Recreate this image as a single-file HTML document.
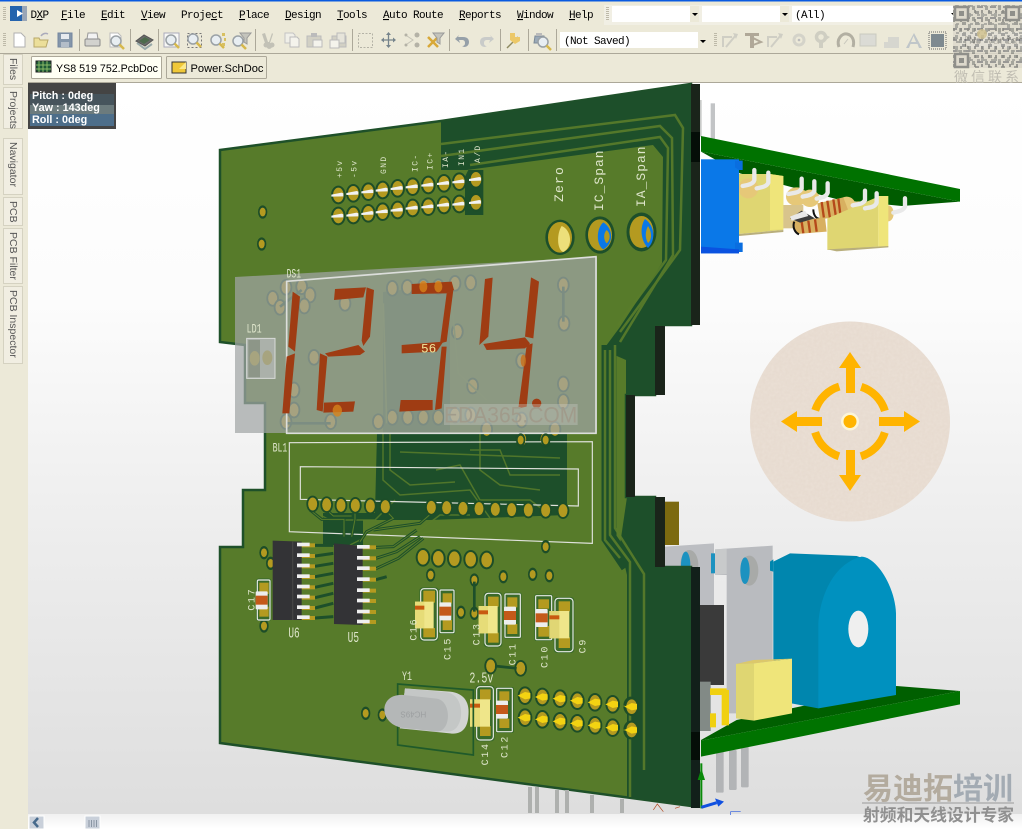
<!DOCTYPE html>
<html><head><meta charset="utf-8"><title>PCB 3D</title>
<style>
html,body{margin:0;padding:0;background:#fff;width:1022px;height:829px;overflow:hidden}
svg{display:block}
.m{font:11px "Liberation Mono",monospace;letter-spacing:-.6px;fill:#000}
.tab{font:10.5px "Liberation Sans",sans-serif;fill:#555}
.i{font:bold 10.8px "Liberation Sans",sans-serif;fill:#fff}
.s{font-family:"Liberation Mono",monospace;fill:#dfe6cc}
</style></head><body>
<svg width="1022" height="829" viewBox="0 0 1022 829" xmlns="http://www.w3.org/2000/svg">
<defs>
<linearGradient id="bg" x1="0" y1="83" x2="0" y2="814" gradientUnits="userSpaceOnUse"><stop offset="0" stop-color="#fff"/><stop offset=".3" stop-color="#fcfcfc"/><stop offset=".57" stop-color="#efefef"/><stop offset="1" stop-color="#dedede"/></linearGradient>
<linearGradient id="bt" x1="0" y1="0" x2="0" y2="1"><stop offset="0" stop-color="#f0f0f0"/><stop offset="1" stop-color="#fff"/></linearGradient>
<pattern id="q1" width="13" height="11" patternUnits="userSpaceOnUse"><rect width="13" height="11" fill="#ddd9cc"/><rect x="0" y="0" width="4" height="3" fill="#8f8f8a"/><rect x="6" y="2" width="3" height="4" fill="#9c9c96"/><rect x="2" y="6" width="6" height="2" fill="#888"/><rect x="10" y="6" width="3" height="4" fill="#96968f"/></pattern>
<pattern id="q2" width="7" height="9" patternUnits="userSpaceOnUse"><rect x="1" y="1" width="2" height="3" fill="#8a8a85" opacity=".8"/><rect x="4" y="5" width="3" height="2" fill="#a0a09a" opacity=".8"/></pattern>
<filter id="tx" x="0" y="0" width="1" height="1"><feTurbulence type="fractalNoise" baseFrequency=".35" numOctaves="2" seed="4"/><feColorMatrix values="0 0 0 0 1  0 0 0 0 .96  0 0 0 0 .9  0 0 0 .7 -.2"/><feComposite in2="SourceAlpha" operator="in"/></filter>
<g id="p"><ellipse rx="22" ry="28" fill="#1d4d28"/><ellipse rx="16" ry="22" fill="#b49a20"/></g>
<g id="d"><ellipse rx="19" ry="25" fill="#1d4d28"/><ellipse rx="13.500" ry="19.500" fill="#b49a20"/></g>
<g id="sm"><ellipse rx="14" ry="20" fill="#1d4d28"/><ellipse rx="9" ry="13" fill="#b49a20"/></g>
<g id="hp"><use href="#p"/><path d="M-21-1 10-7 15-5 15 4 -21 5Z" fill="#f2f2f2"/></g>
<g id="yp"><use href="#p"/><path d="M-22 0 0-11 16-8 16 8 0 11Z" fill="#f3d312"/></g>
<g id="mg"><circle r="5" fill="#e8eef2" stroke="#9aa1a6" stroke-width="1.500"/><path d="M3.500 3.500 8 8" stroke="#d6b84c" stroke-width="2.500"/></g>
<g id="res"><rect x="0" y="0" width="36" height="54" rx="3" fill="#ededed"/><rect x="0" y="13" width="36" height="27" fill="#c4591a"/></g>
</defs>

<!-- chrome -->
<rect width="1022" height="829" fill="#ece9d8"/>
<rect width="1022" height="1.500" fill="#0a5ae0"/>
<rect x="604" y="5" width="350" height="20" fill="#f1efe4"/>
<g fill="#bdb9a8"><rect x="3" y="7" width="3" height="1"/><rect x="3" y="9" width="3" height="1"/><rect x="3" y="11" width="3" height="1"/><rect x="3" y="13" width="3" height="1"/><rect x="3" y="15" width="3" height="1"/><rect x="3" y="17" width="3" height="1"/><rect x="3" y="19" width="3" height="1"/>
<rect x="3" y="33" width="3" height="1"/><rect x="3" y="35" width="3" height="1"/><rect x="3" y="37" width="3" height="1"/><rect x="3" y="39" width="3" height="1"/><rect x="3" y="41" width="3" height="1"/><rect x="3" y="43" width="3" height="1"/><rect x="3" y="45" width="3" height="1"/>
<rect x="606" y="7" width="3" height="1"/><rect x="606" y="9" width="3" height="1"/><rect x="606" y="11" width="3" height="1"/><rect x="606" y="13" width="3" height="1"/><rect x="606" y="15" width="3" height="1"/><rect x="606" y="17" width="3" height="1"/><rect x="606" y="19" width="3" height="1"/>
<rect x="714" y="33" width="3" height="1"/><rect x="714" y="35" width="3" height="1"/><rect x="714" y="37" width="3" height="1"/><rect x="714" y="39" width="3" height="1"/><rect x="714" y="41" width="3" height="1"/><rect x="714" y="43" width="3" height="1"/><rect x="714" y="45" width="3" height="1"/></g>
<rect x="10" y="6" width="12" height="15" fill="#2463ad"/><rect x="22" y="6" width="5" height="15" fill="#9aa6b6"/><path d="M17 10 23 13.500 17 17Z" fill="#fff"/>
<text class="m" x="30.500" y="18">D<tspan text-decoration="underline">X</tspan>P</text>
<text class="m" x="61" y="18"><tspan text-decoration="underline">F</tspan>ile</text>
<text class="m" x="101" y="18"><tspan text-decoration="underline">E</tspan>dit</text>
<text class="m" x="141" y="18"><tspan text-decoration="underline">V</tspan>iew</text>
<text class="m" x="181" y="18">Proje<tspan text-decoration="underline">c</tspan>t</text>
<text class="m" x="239" y="18"><tspan text-decoration="underline">P</tspan>lace</text>
<text class="m" x="285" y="18"><tspan text-decoration="underline">D</tspan>esign</text>
<text class="m" x="337" y="18"><tspan text-decoration="underline">T</tspan>ools</text>
<text class="m" x="383" y="18"><tspan text-decoration="underline">A</tspan>uto Route</text>
<text class="m" x="459" y="18"><tspan text-decoration="underline">R</tspan>eports</text>
<text class="m" x="517" y="18"><tspan text-decoration="underline">W</tspan>indow</text>
<text class="m" x="569" y="18"><tspan text-decoration="underline">H</tspan>elp</text>
<!-- combos -->
<rect x="612" y="6" width="87" height="16" fill="#fff"/><rect x="690" y="6" width="9" height="16" fill="#ece9d8"/><path d="M692 13h6l-3 3z"/>
<rect x="702" y="6" width="87" height="16" fill="#fff"/><rect x="780" y="6" width="9" height="16" fill="#ece9d8"/><path d="M782 13h6l-3 3z"/>
<rect x="792" y="6" width="162" height="16" fill="#fff"/><text class="m" x="795" y="18">(All)</text><path d="M951 13h6l-3 3z"/>
<rect x="560" y="32" width="148" height="16" fill="#fff"/><rect x="698" y="32" width="10" height="16" fill="#ece9d8"/><path d="M700 40h6l-3 3z"/><text class="m" x="564" y="44">(Not Saved)</text>
<rect x="0" y="53" width="1022" height="1" fill="#aca899"/><rect x="28" y="82" width="994" height="1" fill="#aca899"/>
<!-- toolbar separators -->
<g fill="#aca899"><rect x="79" y="29" width="1" height="22"/><rect x="130" y="29" width="1" height="22"/><rect x="158" y="29" width="1" height="22"/><rect x="255" y="29" width="1" height="22"/><rect x="352" y="29" width="1" height="22"/><rect x="449" y="29" width="1" height="22"/><rect x="500" y="29" width="1" height="22"/><rect x="528" y="29" width="1" height="22"/><rect x="556" y="29" width="1" height="22"/></g>
<!-- toolbar icons -->
<path d="M14 33h7l4 4v10H14z" fill="#fff" stroke="#b0b0b0"/>
<path d="M34 47V38h5l1 2h8l-2 7z" fill="#ecdf9a" stroke="#b8a868"/><path d="M41 36c2-3 5-3 7-2" stroke="#aab" fill="none" stroke-width="1.500"/>
<rect x="58" y="33" width="14" height="14" fill="#8496aa" stroke="#7587a0"/><rect x="61" y="34" width="8" height="5" fill="#e6eaef"/><rect x="61" y="42" width="8" height="5" fill="#b3bdc8"/>
<path d="M88 33h9l1 6H87z" fill="#f3f3f3" stroke="#999"/><rect x="85" y="39" width="15" height="7" rx="1" fill="#d2d2ce" stroke="#8a8a8a"/>
<path d="M110 33h8l3 3v11h-11z" fill="#fff" stroke="#bbb"/><use href="#mg" x="116" y="41"/>
<path d="M136 41 144 35 153 40 145 46Z" fill="#6a6a6a" stroke="#555"/><path d="M137 43 145 49 152 44" fill="none" stroke="#9aa" stroke-width="2"/><path d="M139 41 145 37 150 40 144 44Z" fill="#4c6a4c"/>
<path d="M164 33h15v14h-15z" fill="#f8f8f6" stroke="#aab"/><use href="#mg" x="171" y="40"/>
<rect x="187.500" y="33.500" width="14" height="14" fill="none" stroke="#777" stroke-dasharray="2 2"/><use href="#mg" x="193" y="39"/>
<use href="#mg" x="216" y="40"/><g fill="#d8c060"><rect x="222" y="33" width="3" height="3"/><rect x="224" y="38" width="2" height="3"/><rect x="222" y="43" width="3" height="3"/></g>
<use href="#mg" x="238" y="41"/><path d="M240 33h11l-4 5v6l-3-2v-4z" fill="#c4c4bc" stroke="#999"/>
<g fill="#c2c1b6"><path d="M265 33l3 9h1l3-9 1 1-3 9a3 3 0 1 1-3 1l-2-1-3-9z"/><circle cx="266" cy="45" r="2.500"/><circle cx="272" cy="45" r="2.500"/></g>
<path d="M285 33h8l2 2v8h-10z" fill="#f0efe8" stroke="#c4c4c4"/><path d="M290 37h7l2 2v8h-9z" fill="#f4f3ec" stroke="#bbb"/>
<path d="M307 36h14v11h-14z" fill="#d2d0c4" stroke="#bbb"/><rect x="311" y="33" width="6" height="4" fill="#bbb"/><path d="M313 40h9v7h-9z" fill="#f4f3ec" stroke="#bbb"/>
<path d="M332 36h14v11h-14z" fill="#d2d0c4" stroke="#bbb"/><path d="M337 33h8v10h-8z" fill="#e6e4da" stroke="#bbb"/><path d="M330 40h9v8h-9z" fill="#f4f3ec" stroke="#bbb"/>
<rect x="358.500" y="33.500" width="14" height="14" fill="none" stroke="#b4b2a6" stroke-dasharray="2 1.500"/>
<path d="M388.500 33v14M382 40h13" stroke="#76848c" stroke-width="1.300"/><path d="M386 35l2.500-3 2.500 3zM386 45l2.500 3 2.500-3zM384 37.500l-3 2.500 3 2.500zM393 37.500l3 2.500-3 2.500z" fill="#76848c"/>
<g fill="#b4b2a6"><circle cx="406" cy="35" r="1.500"/><circle cx="406" cy="45" r="1.500"/><circle cx="417" cy="35" r="2.500"/><circle cx="417" cy="45" r="2.500"/></g><path d="M407 36l6 4-6 4" fill="none" stroke="#c4c2b6"/>
<path d="M428 37l10 10M438 37l-10 10" stroke="#d8a838" stroke-width="2.500"/><path d="M433 33h11l-4 5v6l-3-2v-4z" fill="#c4c4bc" stroke="#999"/>
<path d="M458 37h5c5 0 6 3 6 5 0 3-2 5-5 5l-2-1c2 0 3-1 3-3s-1-3-3-3h-3l1 3-5-4 4-4z" fill="#96a0a8"/>
<path d="M491 37h-5c-5 0-6 3-6 5 0 3 2 5 5 5l2-1c-2 0-3-1-3-3s1-3 3-3h3l-1 3 5-4-4-4z" fill="#c9cbc9"/>
<path d="M507 48 518 37" stroke="#8d8a60" stroke-width="1.500"/><path d="M510 33h5v4h5v4l-5 3-5-4z" fill="#ecc868"/>
<path d="M535 36h9l1 7h-11z" fill="#9baab8" stroke="#7c8a98"/><use href="#mg" x="543" y="42"/><rect x="536" y="33" width="6" height="3" fill="#bbb"/>
<g stroke="#cfcec4" fill="none" stroke-width="2"><path d="M723 47V37h9"/><path d="M726 47l10-12"/></g><path d="M733 33l5 1-2 5z" fill="#cfcec4"/>
<path d="M745 33h14v3h-5v12h-4V36h-5z" fill="#b0a898"/><path d="M753 38l8 4-8 3" fill="none" stroke="#b0a898" stroke-width="2"/>
<g stroke="#cfcec4" fill="none" stroke-width="2"><path d="M768 47V37h9"/><path d="M771 47l10-12"/></g><path d="M778 33l5 1-2 5z" fill="#cfcec4"/>
<circle cx="799" cy="40" r="5" fill="none" stroke="#d4d3c9" stroke-width="3"/><circle cx="799" cy="40" r="1.300" fill="#bbb"/>
<circle cx="821" cy="37" r="4.500" fill="none" stroke="#cfcec2" stroke-width="3.500"/><rect x="819" y="41" width="4" height="7" fill="#cfcec2"/><path d="M826 35l4 2-4 3z" fill="#cfcec2"/>
<path d="M839 47c-3-8 3-14 8-13s8 6 6 13" fill="none" stroke="#b2afa2" stroke-width="3"/><path d="M844 44l4-5" stroke="#c7c6bc"/>
<rect x="860" y="34" width="16" height="12" fill="#dbdbd5" stroke="#cacac0"/>
<path d="M884 42h15v6h-15zM888 37h11v5h-11z" fill="#d6d6cf"/>
<path d="M906 48 914 33 922 48h-3l-1.500-4h-7l-1.500 4zM911 42h5l-2.500-6z" fill="#c0c6c9"/>
<rect x="931" y="34" width="13" height="13" fill="#7e8a90"/><rect x="929" y="32" width="17" height="17" fill="none" stroke="#666" stroke-dasharray="1 1"/>
<!-- variations + QR overlay -->
<rect x="960" y="32" width="62" height="16" fill="#fff"/>
<text class="m" x="963" y="44">[No Variat</text>
<rect x="953" y="5" width="69" height="63" fill="url(#q1)" opacity=".82"/><rect x="953" y="5" width="69" height="63" fill="url(#q2)"/>
<g fill="#ddd9cc" stroke="#8f8f8a" stroke-width="2.500"><rect x="955" y="7" width="13" height="13"/><rect x="1006" y="7" width="13" height="13"/><rect x="955" y="54" width="13" height="13"/></g>
<g fill="#8f8f8a"><rect x="959" y="11" width="5" height="5"/><rect x="1010" y="11" width="5" height="5"/><rect x="959" y="58" width="5" height="5"/></g>
<circle cx="982" cy="34" r="5" fill="#cfc08c" opacity=".8"/>
<text x="954" y="82" font-family="'Liberation Sans','Noto Sans CJK SC',sans-serif" font-size="14" fill="#c0bdb2" letter-spacing="3">微信联系</text>
<!-- doc tabs -->
<rect x="31.500" y="56.500" width="130" height="22" rx="1" fill="#fffff4" stroke="#aca899"/>
<rect x="36" y="61" width="15" height="11" fill="#1e5a36" stroke="#222"/><path d="M39 61v11M43 61v11M47 61v11M36 65h15M36 69h15" stroke="#8bbb66"/>
<text x="56" y="72" font-family="'Liberation Sans',sans-serif" font-size="11" fill="#000" textLength="102" lengthAdjust="spacingAndGlyphs">YS8 519 752.PcbDoc</text>
<rect x="166.500" y="56.500" width="100" height="22" rx="1" fill="#ece9d8" stroke="#aca899"/>
<rect x="172" y="62" width="14" height="11" fill="#f0c838" stroke="#333"/><path d="M179 69h7v-7z" fill="#fbe98a"/>
<text x="190.500" y="72" font-family="'Liberation Sans',sans-serif" font-size="11" fill="#000" textLength="73" lengthAdjust="spacingAndGlyphs">Power.SchDoc</text>
<!-- side tabs -->
<g fill="#f1eee2" stroke="#d5d2c1">
<rect x="3.500" y="54.500" width="19" height="30"/><rect x="3.500" y="87.500" width="19" height="41"/><rect x="3.500" y="138.500" width="19" height="56"/><rect x="3.500" y="197.500" width="19" height="28"/><rect x="3.500" y="228.500" width="19" height="55"/><rect x="3.500" y="286.500" width="19" height="77"/></g>
<g class="tab"><text class="tab" transform="translate(10 58) rotate(90)">Files</text><text class="tab" transform="translate(10 91) rotate(90)">Projects</text><text class="tab" transform="translate(10 142) rotate(90)">Navigator</text><text class="tab" transform="translate(10 201) rotate(90)">PCB</text><text class="tab" transform="translate(10 232) rotate(90)">PCB Filter</text><text class="tab" transform="translate(10 290) rotate(90)">PCB Inspector</text></g>

<!-- 3D view bg -->
<rect x="28" y="83" width="994" height="731" fill="url(#bg)"/>
<rect x="28" y="814" width="994" height="15" fill="url(#bt)"/>

<!-- right-top assembly (zoom 5 coordinates) -->
<g transform="translate(620 90) scale(.33333)">
<rect x="272" y="40" width="13" height="110" fill="#c2c4c6"/><rect x="235" y="30" width="10" height="110" fill="#c8cac8"/>
<path d="M243 185 1020 335 845 348 660 330 360 250Z" fill="#005c00"/>
<path d="M243 138 1020 297V335L243 185Z" fill="#007200"/>
<path d="M357 252 450 252 490 258V420L357 432Z" fill="#dfd672"/><path d="M450 252 490 258V418L450 420Z" fill="#efe57a"/><path d="M357 432 490 420V426L357 438Z" fill="#b8ae7c"/>
<g fill="#e6c878"><ellipse cx="385" cy="295" rx="30" ry="30"/><ellipse cx="530" cy="320" rx="32" ry="28"/><ellipse cx="570" cy="325" rx="28" ry="26"/><ellipse cx="680" cy="350" rx="28" ry="30"/><ellipse cx="715" cy="360" rx="26" ry="26"/><ellipse cx="805" cy="370" rx="16" ry="24"/></g>
<rect x="490" y="345" width="60" height="70" fill="#d8c48c"/>
<path d="M592 340 670 322 690 375 600 388Z" fill="#d8b060"/>
<g stroke="#b5491a" stroke-width="7"><path d="M605 336 612 385M622 332 630 385M640 328 648 382M655 326 662 380"/></g>
<path d="M580 358c0 16 8 28 18 28" stroke="#111" stroke-width="6" fill="none"/>
<path d="M515 395 615 382 620 425 530 432Z" fill="#d8b060"/>
<g stroke="#b5491a" stroke-width="7"><path d="M545 395 550 430M565 392 570 428M585 388 590 425"/></g>
<path d="M523 395c-6 14 0 32 14 38" stroke="#111" stroke-width="6" fill="none"/>
<path d="M510 385 545 362 585 385 540 398Z" fill="#3c3c3c"/>
<path d="M622 385 775 320 775 470 622 480Z" fill="#dfd672"/><path d="M775 318 805 318 805 470 775 470Z" fill="#efe57a"/><path d="M622 478 805 468V472L650 484Z" fill="#b8ae7c"/>
<g fill="none" stroke="#e9e9e9" stroke-width="13" stroke-linecap="round"><path d="M403 240V270C400 282 385 285 368 288"/><path d="M445 248V278C440 290 425 292 410 295"/><path d="M545 266V295C540 308 525 308 505 312"/><path d="M583 274V303C578 315 565 316 548 320"/><path d="M623 280V308C618 322 605 322 590 326"/><path d="M735 302V330C730 342 715 342 698 346"/><path d="M770 310V338C765 352 750 352 735 355"/><path d="M855 325V350C850 362 835 364 820 368"/></g>
<path d="M510 380 555 362 565 378 515 392Z" fill="#e8e8e8"/>
<rect x="243" y="208" width="114" height="282" fill="#0a78e8"/><path d="M345 212H368V240H357L345 232ZM345 458H368V486H345Z" fill="#0a6ee0"/><path d="M243 470 357 478 357 490 243 490Z" fill="#0a52e0"/>
</g>

<!-- right-bottom assembly (zoom 6 coordinates) -->
<g transform="translate(620 500) scale(.33333)">
<rect x="135" y="5" width="42" height="130" fill="#7c6a10"/>
<g fill="#b2b4b6"><rect x="288" y="750" width="23" height="128" rx="4"/><rect x="327" y="750" width="23" height="120" rx="4"/><rect x="363" y="740" width="23" height="122" rx="4"/></g>
<path d="M243 720 350 660 830 558 1020 573 243 722Z" fill="#005f00"/>
<path d="M243 722 1020 573V613L243 770Z" fill="#007300"/>
<path d="M135 140 282 130V320H240V520H135Z" fill="#bcbec2"/>
<ellipse cx="208" cy="195" rx="27" ry="45" fill="#a8aaa8"/><ellipse cx="197" cy="195" rx="14" ry="40" fill="#1c92c0"/>
<path d="M285 148 458 137V640H320V225H285Z" fill="#b9bbbf"/>
<path d="M285 148 320 146V222L285 225Z" fill="#c8cacb"/>
<rect x="273" y="160" width="12" height="60" fill="#1c92c0"/>
<ellipse cx="388" cy="212" rx="27" ry="45" fill="#a8aaa8"/><ellipse cx="375" cy="212" rx="14" ry="40" fill="#1c92c0"/>
<path d="M460 185 510 160 710 168 730 175 730 420 595 625 460 600Z" fill="#0086ae"/>
<path d="M595 625V370C600 290 640 190 725 170 770 172 825 260 828 340V585Z" fill="#0091bf"/>
<ellipse cx="715" cy="387" rx="30" ry="55" fill="#efefef"/>
<path d="M450 185 460 178V215L450 212Z" fill="#0086ae"/>
<path d="M348 492 402 490 402 662 348 655Z" fill="#dfd672"/><path d="M402 490 516 476V640L402 662Z" fill="#efe57a"/><path d="M348 492 400 480 516 476 402 490Z" fill="#dcc86a"/>
<rect x="240" y="315" width="72" height="240" fill="#3a3a3a"/>
<rect x="240" y="545" width="32" height="148" fill="#828a86"/>
<g fill="#f0d010"><rect x="305" y="570" width="22" height="106"/><rect x="270" y="565" width="50" height="20"/><rect x="270" y="640" width="18" height="42"/></g>
</g>

<!-- main board -->
<path d="M220 150 441 121 691 84V325H655V395H626V497H655V567H691V806L220 743V547H243V490H265V403H245V345L220 342Z" fill="#577b2a" stroke="#1e5029" stroke-width="2.500"/>
<!-- dark copper regions -->
<path d="M441 122 691 84V325H655V395H626V360L603 350 620 327 662 263 663 157 653 145 467 170 441 170Z" fill="#1d4f2a"/>
<path d="M627 497H655V567H691V806L627 797V575L620 545Z" fill="#1d4f2a"/>
<path d="M383 292 450 285V433H383Z" fill="#3c6529"/>
<path d="M377 433H567V515L430 520H363V545H323V513H375Z" fill="#1d4f2a"/>
<!-- outer edges -->
<rect x="691" y="84" width="9" height="241" fill="#1a241a"/>
<rect x="691" y="132" width="9" height="30" fill="#050e08"/>
<rect x="655" y="326" width="10" height="69" fill="#1a241a"/>
<rect x="626" y="395" width="9" height="102" fill="#1a241a"/>
<rect x="655" y="497" width="10" height="70" fill="#1a241a"/>
<rect x="691" y="567" width="9" height="241" fill="#12201a"/>
<rect x="691" y="732" width="9" height="28" fill="#050e08"/>
<!-- trace bands -->
<path d="M609 345V538L628 566" fill="none" stroke="#1d4f2a" stroke-width="15"/>
<g fill="none" stroke="#5a7d2a" stroke-width="2.500" opacity=".9">
<path d="M441 144 675 115 683 128 680 250 620 332"/>
<path d="M441 156 660 126 672 138 673 255 620 342"/>
<path d="M470 165 660 137 668 148 666 260 618 325"/>
<path d="M605 350V540L620 558"/>
<path d="M610 350V535L630 562V797"/>
<path d="M615 345V528L644 574V770"/>
</g>
<g fill="none" stroke="#5a7d2a" stroke-width="1.500" opacity=".85">
<path d="M383 433V480L400 495 470 490 490 518"/><path d="M390 433V470L410 485 455 482"/><path d="M436 470 460 465 480 500 530 500 550 515"/><path d="M480 433V470L500 485 540 490"/><path d="M470 450 500 450 510 475H560"/><path d="M400 452 560 458"/><path d="M350 545 380 530H420L440 515H470"/><path d="M355 560 390 552 410 535 440 530"/><path d="M360 570 395 560 420 540 460 535"/><path d="M310 510 330 520H375L395 500"/>
</g>
<!-- board detail group zoom 3 -->
<g transform="translate(220 90) scale(.33333)">
<path d="M745 240H790V375H735V260Z" fill="#1d4f2a"/>
<use href="#sm" x="128" y="366"/><use href="#sm" x="125" y="462"/>
<use href="#hp" x="355" y="315"/><use href="#hp" x="400" y="310"/><use href="#hp" x="445" y="305"/><use href="#hp" x="488" y="300"/><use href="#hp" x="533" y="295"/><use href="#hp" x="578" y="290"/><use href="#hp" x="625" y="285"/><use href="#hp" x="672" y="280"/><use href="#hp" x="718" y="275"/><use href="#hp" x="768" y="268"/>
<use href="#hp" x="355" y="378"/><use href="#hp" x="400" y="375"/><use href="#hp" x="445" y="370"/><use href="#hp" x="488" y="365"/><use href="#hp" x="533" y="360"/><use href="#hp" x="578" y="354"/><use href="#hp" x="625" y="350"/><use href="#hp" x="672" y="345"/><use href="#hp" x="718" y="342"/><use href="#hp" x="768" y="337"/>
<!-- spans -->
<ellipse cx="1020" cy="442" rx="44" ry="53" fill="#1d4f2a"/><ellipse cx="1020" cy="442" rx="36" ry="46" fill="#b49a20"/><path d="M1025 408C1055 420 1060 470 1030 486 1010 480 1010 430 1025 408Z" fill="#ecdf7a"/>
<ellipse cx="1140" cy="435" rx="44" ry="56" fill="#1d4f2a"/><ellipse cx="1140" cy="435" rx="36" ry="47" fill="#b49a20"/><path d="M1150 397C1180 415 1182 460 1150 478 1128 465 1128 415 1150 397Z" fill="#0a78e8"/><path d="M1160 420C1172 430 1172 450 1160 460 1150 450 1150 430 1160 420Z" fill="#b49a20"/>
<!-- pads under panel -->
<use href="#d" x="198" y="592"/><use href="#d" x="245" y="590"/><use href="#d" x="270" y="615"/><use href="#d" x="158" y="625"/><use href="#d" x="180" y="652"/><use href="#d" x="253" y="648"/><use href="#d" x="375" y="640"/><use href="#d" x="282" y="802"/><use href="#d" x="517" y="595"/><use href="#d" x="562" y="592"/><use href="#d" x="610" y="590"/><use href="#d" x="655" y="590"/><use href="#d" x="705" y="580"/><use href="#d" x="752" y="578"/><use href="#d" x="1030" y="585"/><use href="#d" x="1032" y="700"/><use href="#d" x="712" y="725"/><use href="#d" x="905" y="812"/><use href="#d" x="758" y="888"/><use href="#d" x="1030" y="882"/><use href="#d" x="1030" y="935"/><use href="#d" x="222" y="900"/><use href="#d" x="222" y="960"/><use href="#d" x="198" y="995"/><use href="#d" x="332" y="995"/><use href="#d" x="475" y="995"/><use href="#d" x="517" y="982"/><use href="#d" x="563" y="982"/><use href="#d" x="610" y="982"/><use href="#d" x="655" y="982"/><use href="#d" x="705" y="975"/><use href="#d" x="752" y="975"/><use href="#d" x="905" y="990"/><use href="#d" x="800" y="1018"/>
<path d="M1030 590V695M198 1000H332M245 600 180 650" stroke="#1d4f2a" stroke-width="8" fill="none"/>
<path d="M490 640 500 1000M690 580 715 850 800 930" stroke="#5a7d2a" stroke-width="5" fill="none"/>
<use href="#d" x="905" y="1048"/><use href="#d" x="975" y="1048"/><use href="#d" x="1005" y="1018"/>
</g>
<!-- translucent panel -->
<path d="M235 277 597 257V433H235Z" fill="#a1a5a5" fill-opacity=".72"/>
<g transform="translate(220 90) scale(.33333)">
<path d="M200 574 1128 500V1030H200Z" fill="none" stroke="#dcdedb" stroke-width="5"/>
<path d="M80 745H165V865H80Z" fill="#bfc2c4" fill-opacity=".6" stroke="#d8dad8" stroke-width="3"/><rect x="85" y="750" width="35" height="112" fill="#8d9688"/>
<ellipse cx="104" cy="805" rx="15" ry="22" fill="#a7a47f"/><ellipse cx="142" cy="803" rx="15" ry="22" fill="#a7a47f"/>
<g fill="#9f3c13">
<path d="M218 605 240 620 225 785 205 770Z"/><path d="M200 800 225 790 208 970 187 970Z"/>
<path d="M345 597 438 592 430 622 342 630Z"/><path d="M440 592 462 600 450 740 430 768 425 752Z"/>
<path d="M315 790 415 765 435 785 420 795 325 800Z"/><path d="M300 790 322 800 308 965 290 960Z"/><path d="M312 938 405 934 400 965 310 968Z"/>
<path d="M575 582 695 575 702 600 680 610 575 612Z"/><path d="M680 610 700 600 680 755 660 760Z"/><path d="M545 765 670 755 660 770 650 785 545 790Z"/><path d="M665 770 680 770 665 955 645 960Z"/><path d="M542 930 638 930 638 960 538 965Z"/>
<path d="M795 567 818 563 805 740 778 765Z"/><path d="M790 762 915 742 930 760 915 775 800 780Z"/><path d="M933 562 957 575 940 745 915 740Z"/><path d="M920 765 938 760 920 950 895 955Z"/><circle cx="950" cy="940" r="14"/>
</g>
<ellipse cx="610" cy="590" rx="12" ry="17" fill="#d6821c" opacity=".8"/><ellipse cx="655" cy="590" rx="12" ry="17" fill="#d6821c" opacity=".8"/><ellipse cx="352" cy="962" rx="14" ry="18" fill="#d6821c" opacity=".8"/><ellipse cx="910" cy="812" rx="8" ry="18" fill="#c8701c" opacity=".8"/>
<rect x="672" y="942" width="401" height="63" fill="#cfcfcb" fill-opacity=".35"/>
<text x="672" y="998" font-family="'Liberation Sans',sans-serif" font-size="66" fill="#a09b8b" textLength="400" lengthAdjust="spacingAndGlyphs">EDA365.COM</text>
<text x="603" y="788" font-family="'Liberation Mono',monospace" font-size="38" fill="#f1e49a">56</text>
<text class="s" x="200" y="562" font-size="40" textLength="43" lengthAdjust="spacingAndGlyphs">DS1</text>
<text class="s" x="80" y="728" font-size="38" textLength="45" lengthAdjust="spacingAndGlyphs">LD1</text>
</g>
<!-- labels -->
<text class="s" font-size="8" letter-spacing="1.400" transform="translate(342 178) rotate(-90)">+5v</text>
<text class="s" font-size="8" letter-spacing="1.400" transform="translate(356.500 178) rotate(-90)">-5v</text>
<text class="s" font-size="8" letter-spacing="1.400" transform="translate(386 174) rotate(-90)">GND</text>
<text class="s" font-size="8" letter-spacing="1.400" transform="translate(417.500 172) rotate(-90)">IC-</text>
<text class="s" font-size="8" letter-spacing="1.400" transform="translate(432.500 170) rotate(-90)">IC+</text>
<text class="s" font-size="8" letter-spacing="1.400" transform="translate(448 168) rotate(-90)">IA-</text>
<text class="s" font-size="8" letter-spacing="1.400" transform="translate(464 166) rotate(-90)">IN1</text>
<text class="s" font-size="8" letter-spacing="1.400" transform="translate(480 163) rotate(-90)">A/D</text>
<text class="s" font-size="13" letter-spacing="1.200" transform="translate(563 202) rotate(-90)">Zero</text>
<text class="s" font-size="13" letter-spacing="1" transform="translate(603 211) rotate(-90)">IC_Span</text>
<text class="s" font-size="13" letter-spacing="1" transform="translate(645 207) rotate(-90)">IA_Span</text>
<ellipse cx="641.500" cy="232" rx="15" ry="19.500" fill="#1d4f2a"/><ellipse cx="641.500" cy="232" rx="12" ry="16" fill="#b49a20"/><path d="M645 219C655 226 656 240 648 248 640 240 640 226 645 219Z" fill="#0a78e8"/><path d="M648 226C652 232 652 240 648 243 645 238 645 232 648 226Z" fill="#b49a20"/>

<!-- lower board zoom 4 -->
<g transform="translate(220 430) scale(.33333)">
<g fill="none" stroke="#e0e2dc" stroke-width="3.500"><path d="M208 38 1117 35V340L208 305Z"/><path d="M241 110 1075 117V228L241 208Z"/></g>
<text class="s" x="158" y="65" font-size="40" textLength="44" lengthAdjust="spacingAndGlyphs">BL1</text>
<path d="M270 240 305 268H372V320M320 240 340 258H395M405 240V268L395 320M496 240 520 265 440 305 420 335M634 250 600 280 460 300" fill="none" stroke="#1d4f2a" stroke-width="9"/>
<path d="M270 240 305 268H372V320M320 240 340 258H395M405 240V268L395 320M496 240 520 265 440 305 420 335M634 250 600 280 460 300" fill="none" stroke="#5a7d2a" stroke-width="3"/>
<use href="#d" x="278" y="222"/><use href="#d" x="320" y="224"/><use href="#d" x="363" y="226"/><use href="#d" x="406" y="226"/><use href="#d" x="451" y="228"/><use href="#d" x="496" y="230"/>
<use href="#d" x="634" y="232"/><use href="#d" x="680" y="233"/><use href="#d" x="729" y="235"/><use href="#d" x="777" y="236"/><use href="#d" x="826" y="238"/><use href="#d" x="875" y="239"/><use href="#d" x="925" y="240"/><use href="#d" x="977" y="241"/><use href="#d" x="1029" y="242"/>
<use href="#sm" x="977" y="350"/><use href="#sm" x="902" y="30"/><use href="#sm" x="977" y="30"/>
<use href="#p" x="609" y="382"/><use href="#p" x="655" y="385"/><use href="#p" x="703" y="386"/><use href="#p" x="752" y="388"/><use href="#p" x="800" y="390"/>
<use href="#sm" x="632" y="435"/><use href="#sm" x="850" y="440"/><use href="#sm" x="763" y="450"/><use href="#sm" x="938" y="433"/><use href="#sm" x="988" y="437"/>
<use href="#sm" x="723" y="547"/><use href="#sm" x="763" y="550"/><use href="#d" x="812" y="708"/><use href="#d" x="902" y="715"/><use href="#sm" x="437" y="850"/><use href="#sm" x="487" y="855"/><use href="#sm" x="132" y="368"/><use href="#sm" x="152" y="400"/><use href="#sm" x="132" y="588"/>
<path d="M763 455V545M825 708 890 715" stroke="#1d4f2a" stroke-width="8" fill="none"/>
<!-- ICs -->
<g fill="none" stroke="#1d4f2a" stroke-width="9"><path d="M285 346 340 346M285 378 340 370M285 409 340 400M285 440 340 430M285 472 340 460M285 503 340 490M285 534 340 520M285 564 340 560"/><path d="M468 352 520 350 590 300M468 385 530 365 600 320M468 416 535 385 610 325M468 449 500 440"/></g>
<g fill="none" stroke="#5a7d2a" stroke-width="3"><path d="M468 352 520 350 590 300M468 385 530 365 600 320M468 416 535 385 610 325"/></g>
<g fill="#b49a20"><rect x="245" y="340" width="40" height="12"/><rect x="245" y="372" width="40" height="12"/><rect x="245" y="403" width="40" height="12"/><rect x="245" y="435" width="40" height="12"/><rect x="245" y="466" width="40" height="12"/><rect x="245" y="497" width="40" height="12"/><rect x="245" y="528" width="40" height="12"/><rect x="245" y="558" width="40" height="12"/>
<rect x="428" y="346" width="40" height="12"/><rect x="428" y="379" width="40" height="12"/><rect x="428" y="410" width="40" height="12"/><rect x="428" y="443" width="40" height="12"/><rect x="428" y="476" width="40" height="12"/><rect x="428" y="507" width="40" height="12"/><rect x="428" y="540" width="40" height="12"/><rect x="428" y="570" width="40" height="12"/></g>
<path d="M158 332 245 335V570H158Z" fill="#333336"/><rect x="216" y="335" width="4" height="235" fill="#444"/>
<path d="M342 340 428 348V585L342 582Z" fill="#333336"/>
<g fill="#efefef"><rect x="231" y="338" width="38" height="11"/><rect x="231" y="370" width="38" height="11"/><rect x="231" y="401" width="38" height="11"/><rect x="231" y="433" width="38" height="11"/><rect x="231" y="464" width="38" height="11"/><rect x="231" y="494" width="38" height="11"/><rect x="231" y="526" width="38" height="11"/><rect x="231" y="556" width="38" height="11"/>
<rect x="411" y="345" width="38" height="11"/><rect x="411" y="378" width="38" height="11"/><rect x="411" y="409" width="38" height="11"/><rect x="411" y="442" width="38" height="11"/><rect x="411" y="475" width="38" height="11"/><rect x="411" y="506" width="38" height="11"/><rect x="411" y="539" width="38" height="11"/><rect x="411" y="569" width="38" height="11"/></g>
<g fill="#3a6a2a"><rect x="108" y="445" width="46" height="128" rx="8"/><rect x="598" y="472" width="58" height="162" rx="10"/><rect x="656" y="476" width="50" height="136" rx="6"/><rect x="791" y="486" width="56" height="166" rx="10"/><rect x="851" y="488" width="54" height="138" rx="6"/><rect x="943" y="493" width="56" height="140" rx="6"/><rect x="1001" y="501" width="62" height="168" rx="10"/><rect x="766" y="766" width="58" height="168" rx="10"/><rect x="826" y="771" width="56" height="138" rx="6"/></g>
<g fill="#b49a20"><rect x="118" y="458" width="28" height="34"/><rect x="118" y="530" width="28" height="30"/><rect x="610" y="482" width="35" height="36"/><rect x="610" y="594" width="35" height="28"/><rect x="668" y="490" width="28" height="30"/><rect x="668" y="570" width="28" height="30"/><rect x="804" y="500" width="32" height="30"/><rect x="804" y="608" width="32" height="30"/><rect x="862" y="502" width="30" height="30"/><rect x="862" y="582" width="30" height="30"/><rect x="955" y="508" width="32" height="28"/><rect x="955" y="588" width="32" height="32"/><rect x="1016" y="514" width="34" height="30"/><rect x="1016" y="622" width="34" height="32"/><rect x="780" y="778" width="32" height="32"/><rect x="780" y="888" width="32" height="30"/><rect x="838" y="784" width="30" height="28"/><rect x="838" y="866" width="30" height="28"/></g>
<g fill="none" stroke="#e8eae6" stroke-width="3.500"><rect x="112" y="450" width="38" height="120" rx="4"/><rect x="602" y="476" width="50" height="154" rx="10"/><rect x="660" y="480" width="42" height="128" rx="3"/><rect x="795" y="490" width="48" height="158" rx="10"/><rect x="855" y="492" width="46" height="130" rx="3"/><rect x="947" y="497" width="48" height="132" rx="3"/><rect x="1005" y="505" width="54" height="160" rx="10"/><rect x="770" y="770" width="50" height="160" rx="10"/><rect x="830" y="775" width="47" height="130" rx="3"/></g>
<use href="#res" x="107" y="484"/><use href="#res" x="658" y="517"/><use href="#res" x="852" y="530"/><use href="#res" x="947" y="537"/><use href="#res" x="828" y="812"/>
<g><rect x="585" y="515" width="56" height="80" fill="#efe68a"/><rect x="585" y="515" width="28" height="80" fill="#e6dc78"/><rect x="585" y="527" width="28" height="12" fill="#c85a10"/>
<rect x="776" y="528" width="57" height="82" fill="#efe68a"/><rect x="776" y="528" width="28" height="82" fill="#e6dc78"/><rect x="776" y="541" width="28" height="12" fill="#c85a10"/>
<rect x="988" y="543" width="60" height="82" fill="#efe68a"/><rect x="988" y="543" width="30" height="82" fill="#e0d674"/><rect x="988" y="556" width="30" height="12" fill="#c85a10"/>
<rect x="750" y="808" width="60" height="82" fill="#efe68a"/><rect x="750" y="808" width="30" height="82" fill="#e6dc78"/><rect x="750" y="821" width="30" height="12" fill="#c85a10"/></g>
<!-- crystal -->
<path d="M533 762 760 780V975L533 945Z" fill="none" stroke="#1f5a2a" stroke-width="5"/>
<path d="M555 775 690 785C735 790 750 820 745 860 742 895 725 915 690 910L540 895Z" fill="#d2d4d3"/>
<path d="M555 775 680 787C715 792 728 830 722 865 715 895 700 905 680 905L540 895Z" fill="#c4c7c6"/>
<path d="M550 795 650 806C695 812 695 905 650 905L545 893C475 880 475 790 550 795Z" fill="#b4b7b7"/>
<text x="580" y="860" text-anchor="middle" font-family="'Liberation Sans',sans-serif" font-size="24" fill="#9c9fa0" transform="rotate(180 580 852)">HC49S</text>
<use href="#yp" x="915" y="797"/><use href="#yp" x="967" y="801"/><use href="#yp" x="1020" y="806"/><use href="#yp" x="1072" y="812"/><use href="#yp" x="1125" y="817"/><use href="#yp" x="1178" y="823"/><use href="#yp" x="1232" y="828"/>
<use href="#yp" x="915" y="863"/><use href="#yp" x="967" y="868"/><use href="#yp" x="1020" y="874"/><use href="#yp" x="1072" y="880"/><use href="#yp" x="1125" y="886"/><use href="#yp" x="1178" y="893"/><use href="#yp" x="1232" y="900"/>
<text class="s" font-size="44" x="205" y="622" textLength="34" lengthAdjust="spacingAndGlyphs">U6</text>
<text class="s" font-size="44" x="383" y="636" textLength="34" lengthAdjust="spacingAndGlyphs">U5</text>
<text class="s" font-size="30" letter-spacing="5" transform="translate(104 542) rotate(-90)">C17</text>
<text class="s" font-size="30" letter-spacing="5" transform="translate(590 632) rotate(-90)">C16</text>
<text class="s" font-size="30" letter-spacing="5" transform="translate(692 690) rotate(-90)">C15</text>
<text class="s" font-size="30" letter-spacing="5" transform="translate(778 646) rotate(-90)">C13</text>
<text class="s" font-size="30" letter-spacing="5" transform="translate(886 706) rotate(-90)">C11</text>
<text class="s" font-size="30" letter-spacing="5" transform="translate(982 714) rotate(-90)">C10</text>
<text class="s" font-size="30" letter-spacing="5" transform="translate(1096 670) rotate(-90)">C9</text>
<text class="s" font-size="30" letter-spacing="5" transform="translate(804 1006) rotate(-90)">C14</text>
<text class="s" font-size="30" letter-spacing="5" transform="translate(862 984) rotate(-90)">C12</text>
<text class="s" font-size="44" x="748" y="758" textLength="72" lengthAdjust="spacingAndGlyphs">2.5v</text>
<text class="s" font-size="40" x="546" y="750" textLength="30" lengthAdjust="spacingAndGlyphs">Y1</text>
</g>
<!-- under-board pins -->
<g fill="#aeb0ae"><rect x="528" y="787" width="4" height="26"/><rect x="535" y="787" width="4" height="26"/><rect x="555" y="790" width="4" height="23"/><rect x="565" y="790" width="4" height="23"/><rect x="590" y="795" width="4" height="18"/><rect x="620" y="799" width="4" height="14"/></g>
<!-- axis + pins on dark -->
<g transform="translate(620 500) scale(.33333)">
<use href="#yp" x="35" y="620"/><use href="#yp" x="35" y="690"/>
<path d="M244 790V925" stroke="#0a8a0a" stroke-width="6"/><path d="M233 840 244 805 255 840Z" fill="#0a8a0a"/>
<path d="M244 922 290 908" stroke="#1050e0" stroke-width="9"/><path d="M285 895 312 905 295 920Z" fill="#1050e0"/>
<path d="M100 930 112 912 130 935M165 925 180 920" stroke="#b04a20" stroke-width="2" fill="none"/>
<path d="M332 945V935H362" stroke="#2a5ae0" stroke-width="2" fill="none"/>
</g>
<!-- joystick -->
<circle cx="850" cy="421.500" r="100" fill="#e7dbd0"/>
<circle cx="850" cy="421.500" r="100" fill="#000" filter="url(#tx)" opacity=".35"/>
<circle cx="850" cy="421.500" r="36.500" fill="none" stroke="#ffb400" stroke-width="8" stroke-dasharray="35 22.330" stroke-dashoffset="-11.150"/>
<g fill="#ffb400">
<path d="M850 352 861 368H855V393H846V368H839Z"/>
<path d="M850 491 861 475H855V450H846V475H839Z"/>
<path d="M781 421.500 797 411V417H822V426H797V432Z"/>
<path d="M920 421.500 904 411V417H879V426H904V432Z"/>
</g>
<circle cx="850" cy="421.500" r="9" fill="#fbf5d8"/><circle cx="850" cy="421.500" r="6.500" fill="#ffb400"/>
<!-- scrollbar -->
<rect x="29" y="816" width="15" height="13" fill="#c9d0da" stroke="#fff"/><path d="M38 818l-4 4.500 4 4.500" fill="none" stroke="#466a8c" stroke-width="2.500"/>
<rect x="85" y="816" width="15" height="13" fill="#c9d0da" stroke="#fff"/><path d="M89 820v7M91.500 820v7M94 820v7M96.500 820v7" stroke="#8a96a4"/>
<!-- info box -->
<rect x="28" y="83" width="88" height="46" fill="#444"/>
<rect x="30" y="94" width="84" height="11" fill="#46545c"/><rect x="30" y="105" width="84" height="9" fill="#6c7b7d"/><rect x="30" y="114" width="84" height="12" fill="#4d6e8a"/>
<text class="i" x="32" y="99">Pitch : 0deg</text><text class="i" x="32" y="111">Yaw : 143deg</text><text class="i" x="32" y="123">Roll : 0deg</text>
<!-- watermark -->
<text x="863" y="799" font-family="'Liberation Sans','Noto Sans CJK SC',sans-serif" font-size="30" font-weight="700" fill="#b3ab9e">易迪拓</text>
<text x="953" y="799" font-family="'Liberation Sans','Noto Sans CJK SC',sans-serif" font-size="30" font-weight="700" fill="#a3abb3">培训</text>
<rect x="862" y="802" width="152" height="2" fill="#bcbcbc"/>
<text x="863" y="821" font-family="'Liberation Sans','Noto Sans CJK SC',sans-serif" font-size="16.800" font-weight="700" fill="#909090">射频和天线设计专家</text>
</svg>
</body></html>
